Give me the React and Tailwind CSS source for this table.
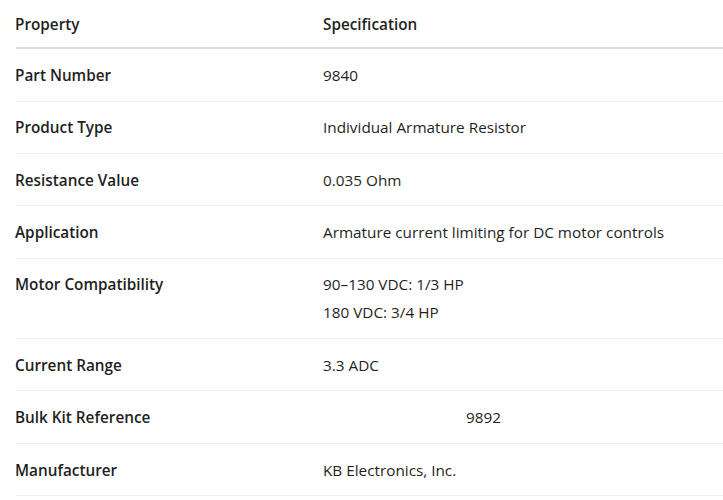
import React from "react";

const rows = [
  { k: "Part Number", v: ["9840"] },
  { k: "Product Type", v: ["Individual Armature Resistor"] },
  { k: "Resistance Value", v: ["0.035 Ohm"] },
  { k: "Application", v: ["Armature current limiting for DC motor controls"] },
  { k: "Motor Compatibility", v: ["90–130 VDC: 1/3 HP", "180 VDC: 3/4 HP"] },
  { k: "Current Range", v: ["3.3 ADC"] },
  { k: "Bulk Kit Reference", v: ["9892"], indent: true },
  { k: "Manufacturer", v: ["KB Electronics, Inc."] },
];

export default function App() {
  return (
    <div
      className="w-[723px] h-[500px] overflow-hidden bg-white text-[#1f1f1f] text-[15.3px]"
      style={{ fontFamily: '"Open Sans", "Noto Sans", sans-serif' }}
    >
      <div className="ml-[16px] w-[760px]">
        <div className="grid grid-cols-[307px_1fr] border-b-2 border-[#dedede] font-semibold leading-[20px]">
          <div className="py-[13.6px] -ml-px">Property</div>
          <div className="py-[13.6px]">Specification</div>
        </div>
        {rows.map((r) => (
          <div
            key={r.k}
            className="grid grid-cols-[307px_1fr] border-b border-[#eeeeee] leading-[20px]"
          >
            <div className="py-[15.7px] font-semibold -ml-px">{r.k}</div>
            <div className={"py-[15.7px] flex flex-col gap-2 " + (r.indent ? "pl-[143px]" : "")}>
              {r.v.map((t) => (
                <div key={t}>{t}</div>
              ))}
            </div>
          </div>
        ))}
      </div>
    </div>
  );
}
